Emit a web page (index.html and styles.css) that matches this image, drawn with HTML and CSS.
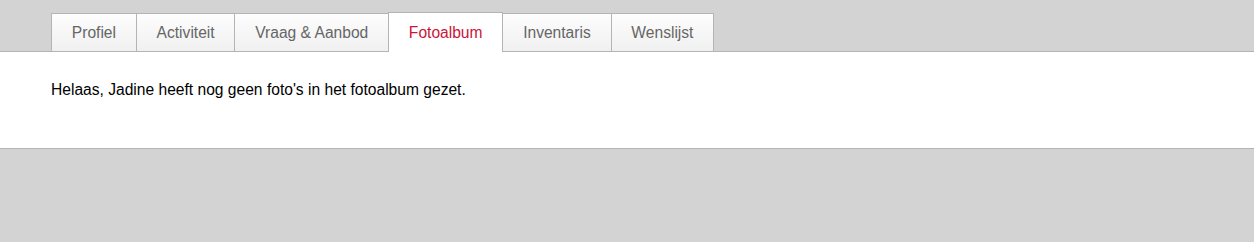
FILE: index.html
```html
<!DOCTYPE html>
<html lang="nl">
<head>
    <meta charset="UTF-8">
    <title>Fotoalbum</title>
    <link rel="stylesheet" href="styles.css">
</head>
<body>
    <!-- Tabs -->
    <div class="tab-bar">
        <ul class="tabs">
            <li class="tab"><a href="#">Profiel</a></li>
            <li class="tab"><a href="#">Activiteit</a></li>
            <li class="tab"><a href="#">Vraag &amp; Aanbod</a></li>
            <li class="tab active"><a href="#">Fotoalbum</a></li>
            <li class="tab"><a href="#">Inventaris</a></li>
            <li class="tab"><a href="#">Wenslijst</a></li>
        </ul>
    </div>

    <!-- Content -->
    <div class="content">
        <p>Helaas, Jadine heeft nog geen foto's in het fotoalbum gezet.</p>
    </div>
</body>
</html>
```

FILE: styles.css
```css
body {
    margin: 0;
    font-family: 'Liberation Sans', Arial, sans-serif;
    font-size: 15.6px;
    background-color: #d3d3d3;
}

.tab-bar {
    padding: 13px 0 0 51px;
    border-bottom: 1px solid #b4b4b4;
}

.tabs {
    display: flex;
    margin: 0;
    padding: 0;
    list-style: none;
}

.tab {
    border: 1px solid #b4b4b4;
    border-bottom: none;
    margin-left: -1px;
    background: linear-gradient(#fdfdfd, #f0f0f0);
}

.tab:first-child {
    margin-left: 0;
}

.tab a {
    display: block;
    padding: 0 19.8px;
    line-height: 37px;
    color: #666;
    text-decoration: none;
}

.tab.active {
    position: relative;
    z-index: 1;
    margin-top: -1px;
    margin-bottom: -1px;
    background: #fff;
}

.tab.active a {
    line-height: 39px;
    color: #c8153b;
}

.content {
    height: 97px;
    box-sizing: border-box;
    padding: 28px 51px;
    background-color: #fff;
    border-bottom: 1px solid #b4b4b4;
}

.content p {
    margin: 0;
    color: #000;
    line-height: 19px;
}
```
